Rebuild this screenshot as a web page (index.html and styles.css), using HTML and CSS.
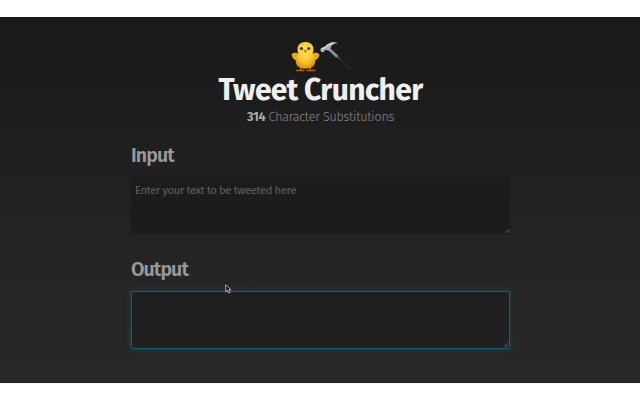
FILE: index.html
```
<!DOCTYPE html>
<html lang="en">
<head>
<meta charset="utf-8">
<title>Tweet Cruncher</title>
<link rel="stylesheet" href="styles.css">
</head>
<body>
<main class="page">
  <header class="header">
    <svg class="logo" width="62" height="32" viewBox="0 0 62 32" aria-hidden="true">
      <defs>
        <radialGradient id="body" cx=".5" cy=".35" r=".65">
          <stop offset="0" stop-color="#ffe45c"/>
          <stop offset=".6" stop-color="#fbc82e"/>
          <stop offset="1" stop-color="#e08e12"/>
        </radialGradient>
        <linearGradient id="handle" x1="0" y1="0" x2="1" y2="1">
          <stop offset="0" stop-color="#a9b2c4"/>
          <stop offset=".42" stop-color="#707a8c"/>
          <stop offset=".5" stop-color="#2b2d31"/>
          <stop offset="1" stop-color="#27292b"/>
        </linearGradient>
      </defs>
      <path d="M11 26v3M20 26v3M6 29.500h8.500M16.500 29.500h9" stroke="#a9600f" stroke-width="1.600" fill="none"/>
      <path d="M9 13C6 11 3 11.500 1.500 13.500C2 17 4 19 8 20ZM22 13c3-2 6-1.500 7.500.5c-.5 3.500-2.500 5.500-6.500 6.500Z" fill="#eca820"/>
      <path d="M15.500 1C10.500 1 7.500 4 7.500 8c0 2 .3 3.500 1 4.800C6.300 15 5.500 18 5.800 21c.7 5 5 6.700 9.700 6.700s9-1.700 9.700-6.700c.3-3-.5-6-2.700-8.200c.7-1.300 1-2.800 1-4.800c0-4-3-7-8-7Z" fill="url(#body)"/>
      <circle cx="11.500" cy="7.500" r="1.600" fill="#4b3a1c"/>
      <circle cx="18.800" cy="7.500" r="1.600" fill="#4b3a1c"/>
      <path d="M13.200 9.500l2-1 2 1-2 2.800Z" fill="#df791a"/>
      <path d="M38.500 7.500L60.500 28" stroke="url(#handle)" stroke-width="1.700"/>
      <path d="M38.500 7.500L47 15.500" stroke="#8790a4" stroke-width="2.800"/>
      <path d="M30 9l3-3.300 1.500.5C37 3 40 1 44 1c1.700 0 2.600.5 3.500 1.200c-4 .2-5.500 1.500-6.500 4l-2.500 3.500-3-1-2 2.500-2.200-.2Z" fill="#a5abb7"/>
      <path d="M31 8l3-.8 3.500-3L44 2" fill="none" stroke="#e2e4e8" stroke-width="1.200"/>
    </svg>
    <h1 class="title">Tweet Cruncher</h1>
    <p class="subtitle"><strong class="count">314</strong> Character Substitutions</p>
  </header>
  <section class="field">
    <h2 class="heading">Input</h2>
    <div class="box">
      <span class="placeholder">Enter your text to be tweeted here</span>
      <svg class="grip" width="4" height="4" viewBox="0 0 4 4"><path d="M0 4L4 0M2 4L4 2"/></svg>
    </div>
  </section>
  <section class="field">
    <h2 class="heading">Output</h2>
    <div class="box box-focus">
      <svg class="grip" width="4" height="4" viewBox="0 0 4 4"><path d="M0 4L4 0M2 4L4 2"/></svg>
    </div>
  </section>
  <svg class="cursor" width="7" height="10" viewBox="0 0 7 10"><path d="M.7.700v7l1.600-1.500 1.200 2.800 1.400-.6-1.200-2.600h2.400Z"/></svg>
</main>
</body>
</html>
```
FILE: styles.css
```
* {
  box-sizing: border-box;
}

body {
  margin: 0;
  padding: 17px 0;
  height: 400px;
  overflow: hidden;
  background: #fff;
  font-family: "Fira Sans", "Noto Sans", sans-serif;
}

.page {
  position: relative;
  height: 366px;
  padding: 24px 130px 0 131px;
  background: linear-gradient(#191919, #262626 75%, #282828);
  border-bottom: 1px solid #172238;
}

.header {
  display: flex;
  flex-direction: column;
  align-items: center;
  height: 103px;
}

.logo {
  display: block;
  flex: none;
}

.title {
  margin: 0;
  color: #efefef;
  font-size: 30px;
  font-weight: 700;
  line-height: 35px;
  letter-spacing: -0.65px;
  white-space: nowrap;
}

.subtitle {
  margin: 0;
  color: #8a8a8a;
  font-size: 12.5px;
  font-weight: 300;
  line-height: 18px;
  letter-spacing: -0.22px;
  white-space: nowrap;
}

.count {
  color: #aaa;
  font-weight: 700;
}

.field {
  height: 114px;
}

.heading {
  margin: 0;
  height: 33px;
  color: #999;
  font-size: 19.5px;
  font-weight: 600;
  line-height: 24px;
  letter-spacing: -0.9px;
}

.box {
  position: relative;
  width: 379px;
  height: 57px;
  padding: 4px;
  background: #1c1c1c;
  border-radius: 2px;
}

.box-focus {
  height: 58px;
  background: #202020;
  border: 1px solid #1b5b76;
  box-shadow: 0 0 4px 1px #174e6699;
}

.placeholder {
  display: block;
  color: #606060;
  font-size: 11.3px;
  line-height: 18px;
  letter-spacing: -0.42px;
  white-space: nowrap;
}

.grip {
  position: absolute;
  right: 1px;
  bottom: 1px;
  fill: none;
  stroke: #666;
  stroke-width: 0.8;
}

.cursor {
  position: absolute;
  left: 225px;
  top: 267px;
  fill: #151515;
  stroke: #bbb;
  stroke-width: 0.9;
}
```
